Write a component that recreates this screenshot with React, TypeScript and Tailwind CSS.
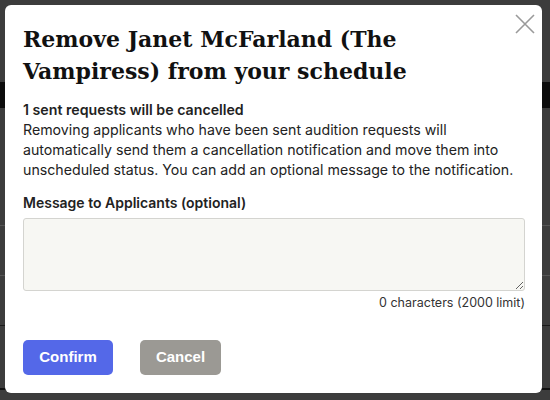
import React from "react";

export default function App() {
  return (
    <div className="relative w-[550px] h-[400px] overflow-hidden bg-[#3c3c3c] pl-[5px] pt-[5px]" style={{ fontFamily: "Inter, 'Liberation Sans', sans-serif" }}>
      {/* faint page content behind overlay */}
      <div className="absolute left-0 top-[82px] w-[550px] h-[26px] bg-[#0c0c0c]" />
      <div className="absolute left-0 top-[225px] w-[550px] h-px bg-[#555]" />
      <div className="absolute left-0 top-[275px] w-[550px] h-px bg-[#555]" />
      <div className="absolute left-0 top-[325px] w-[550px] h-px bg-[#1a1a1a]" />
      <div className="absolute left-0 top-[388px] w-[550px] h-[2px] bg-[#111]" />

      <div className="relative w-[537px] h-[388px] bg-white rounded-[6px] px-[18px] flex flex-col">
        <button className="absolute right-[6px] top-[8px] w-[22px] h-[22px] flex items-center justify-center">
          <svg width="20" height="20" viewBox="0 0 20 20" stroke="#9a9a9a" strokeWidth="1.6" fill="none">
            <path d="M1 1 L19 19 M19 1 L1 19" />
          </svg>
        </button>
        <h1 className="pt-[18px] text-[22px] leading-[32px] font-bold text-[#111] pr-[40px]" style={{ fontFamily: "'DejaVu Serif', serif" }}>
          Remove Janet McFarland (The Vampiress) from your schedule
        </h1>
        <div className="mt-[13px] text-[14.2px] leading-[20px] text-[#222]">
          <div className="font-semibold">1 sent requests will be cancelled</div>
          <div>
            Removing applicants who have been sent audition requests will automatically send them a cancellation notification and move them into unscheduled status. You can add an optional message to the notification.
          </div>
        </div>
        <div className="mt-[13px] text-[14px] leading-[20px] font-semibold text-[#222]">Message to Applicants (optional)</div>
        <textarea className="mt-[5px] block w-[502px] h-[73px] bg-[#f7f7f3] border border-[#d4d4d0] rounded-[3px]" />
        <div className="mt-[4px] w-[502px] text-right text-[12.5px] leading-[16px] text-[#333]">0 characters (2000 limit)</div>
        <div className="mt-[29px] flex gap-[27px]" style={{ fontFamily: "'Liberation Sans', Arial, sans-serif" }}>
          <button className="w-[90px] h-[35px] rounded-[5px] bg-[#5468e8] text-white font-bold text-[15px]">Confirm</button>
          <button className="w-[81px] h-[35px] rounded-[5px] bg-[#9b9994] text-white font-bold text-[15px]">Cancel</button>
        </div>
      </div>
    </div>
  );
}
